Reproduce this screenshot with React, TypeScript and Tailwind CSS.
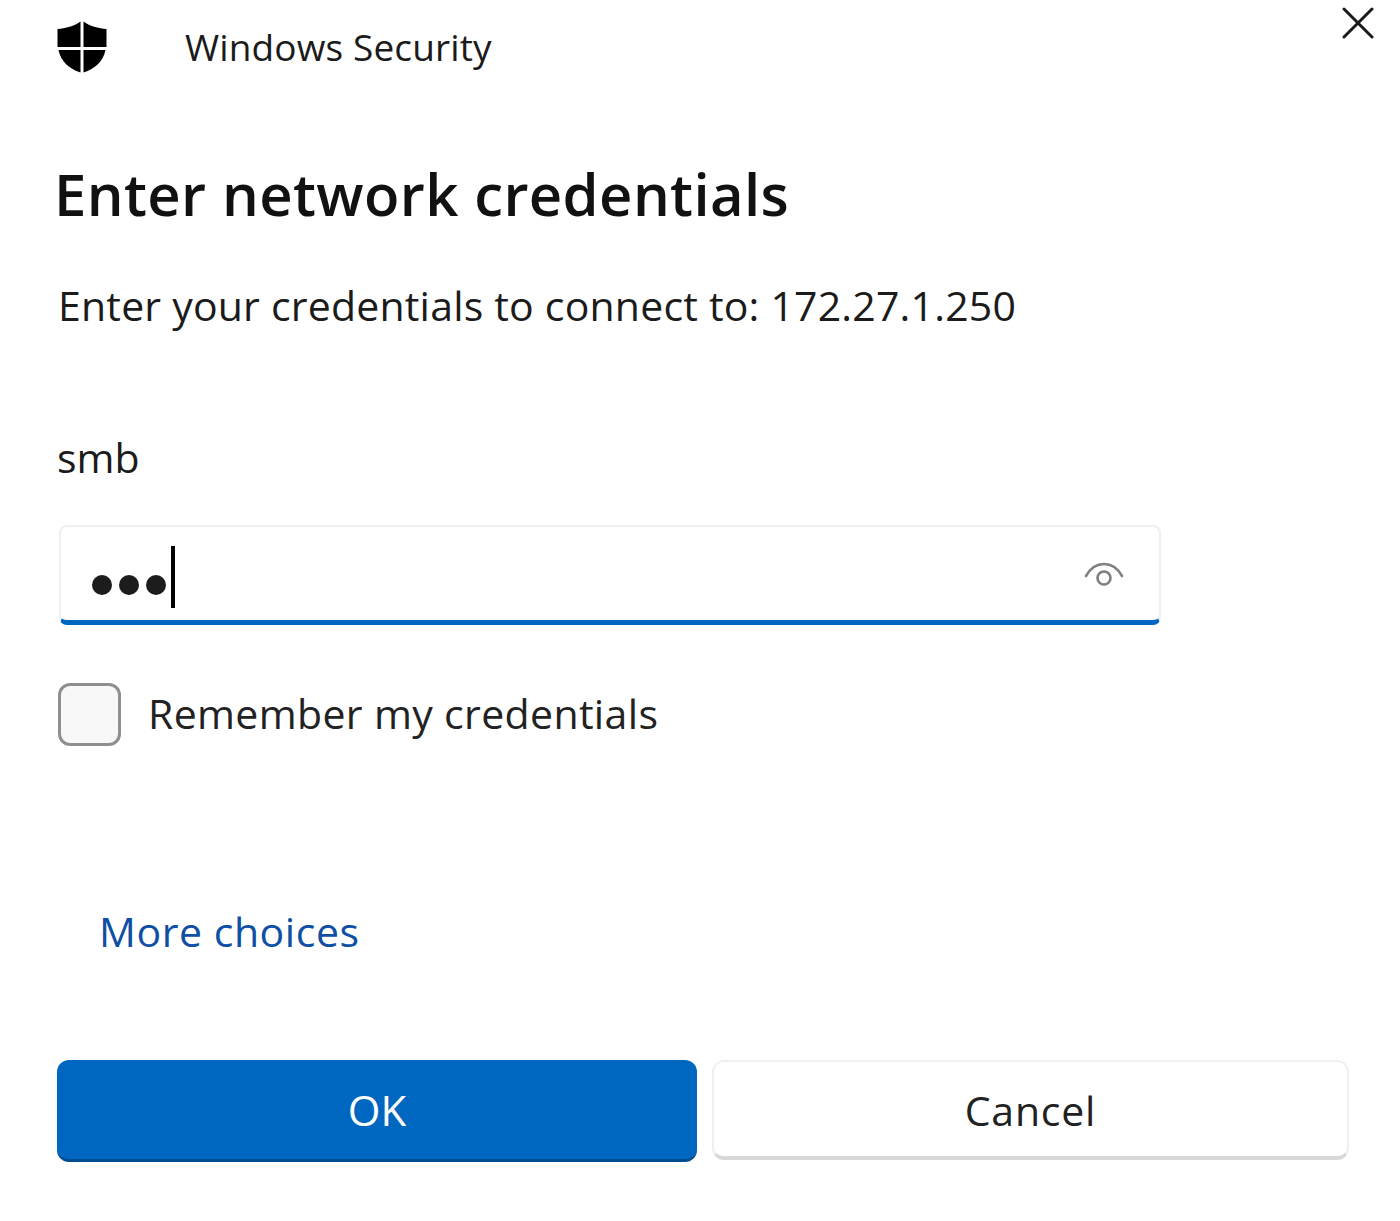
import React from "react";

const font = { fontFamily: '"Open Sans", "Noto Sans", sans-serif' };

const ShieldIcon = () => (
  <svg width="50" height="52" viewBox="0 0 50 52" fill="#000">
    <path d="M23.5 0.5 C18 5 8 7.5 0.5 8 V26 H23.5 Z" />
    <path d="M26.5 0.5 C32 5 42 7.5 49.5 8 V26 H26.5 Z" />
    <path d="M1.5 29 H23.5 V51.5 C12 47.5 4 41 1.5 29 Z" />
    <path d="M48.5 29 H26.5 V51.5 C38 47.5 46 41 48.5 29 Z" />
  </svg>
);

const EyeIcon = () => (
  <svg width="40" height="28" viewBox="0 0 40 28" fill="none" stroke="#7f7f7f" strokeWidth="2.6" strokeLinecap="round">
    <path d="M2 16 C7 7 13 4 20 4 C27 4 33 7 38 16" />
    <circle cx="20" cy="18" r="6.5" />
  </svg>
);

const CloseIcon = () => (
  <svg width="32" height="32" viewBox="0 0 32 32" stroke="#1a1a1a" strokeWidth="3" strokeLinecap="round">
    <path d="M2 2 L30 30 M30 2 L2 30" />
  </svg>
);

export default function App() {
  return (
    <div className="relative w-[1400px] h-[1221px] bg-white text-[#1b1b1b] px-[57px] overflow-hidden" style={font}>
      <button className="absolute top-[7px] right-[26px]">
        <CloseIcon />
      </button>

      <div className="flex items-center h-[52px] mt-[21px] gap-[78px]">
        <ShieldIcon />
        <span className="text-[37px] leading-none tracking-[0.13px] -mt-[2px]">Windows Security</span>
      </div>

      <h1 className="mt-[86px] text-[58px] leading-[70px] font-semibold text-[#111] -ml-[3px] tracking-[0.38px] whitespace-nowrap">
        Enter network credentials
      </h1>

      <p className="mt-[51px] ml-[1px] text-[41px] leading-[50px] tracking-[0.2px] whitespace-nowrap">
        Enter your credentials to connect to: 172.27.1.250
      </p>

      <p className="mt-[102px] text-[41px] leading-[50px]">smb</p>

      <div className="mt-[43px] ml-[2px] w-[1102px] h-[100px] flex items-center justify-between pl-[31px] pr-[35px] rounded-lg border-2 border-[#f0f0f0] border-b-[5px] border-b-[#0067c0]">
        <div className="flex items-center gap-[5px] mt-[6px]">
          <div className="flex gap-[7px] mt-[16px]">
            <span className="w-[20px] h-[20px] rounded-full bg-[#1c1c1c]" />
            <span className="w-[20px] h-[20px] rounded-full bg-[#1c1c1c]" />
            <span className="w-[20px] h-[20px] rounded-full bg-[#1c1c1c]" />
          </div>
          <span className="w-[4px] h-[62px] bg-black" />
        </div>
        <EyeIcon />
      </div>

      <label className="mt-[58px] ml-[1px] flex items-center gap-[27px]">
        <span className="w-[63px] h-[63px] rounded-xl border-[3px] border-[#8f8f8f] bg-[#f8f8f8]" />
        <span className="-mt-[4px] text-[41px] leading-[50px] text-[#222] tracking-[0.35px] whitespace-nowrap">Remember my credentials</span>
      </label>

      <a className="block mt-[160px] ml-[42px] text-[41px] leading-[50px] text-[#0f4fa5] tracking-[0.55px]">More choices</a>

      <div className="mt-[104px] flex gap-[15px]">
        <button className="w-[640px] h-[102px] shrink-0 rounded-xl bg-[#0067c0] border-b-[3px] border-b-[#004e92] text-white text-[42px]">
          OK
        </button>
        <button className="w-[637px] h-[100px] shrink-0 pt-[4px] rounded-xl bg-white border-2 border-[#f0f0f0] border-b-[4px] border-b-[#d8d8d8] text-[#222] text-[41px] tracking-[0.8px]">
          Cancel
        </button>
      </div>
    </div>
  );
}
